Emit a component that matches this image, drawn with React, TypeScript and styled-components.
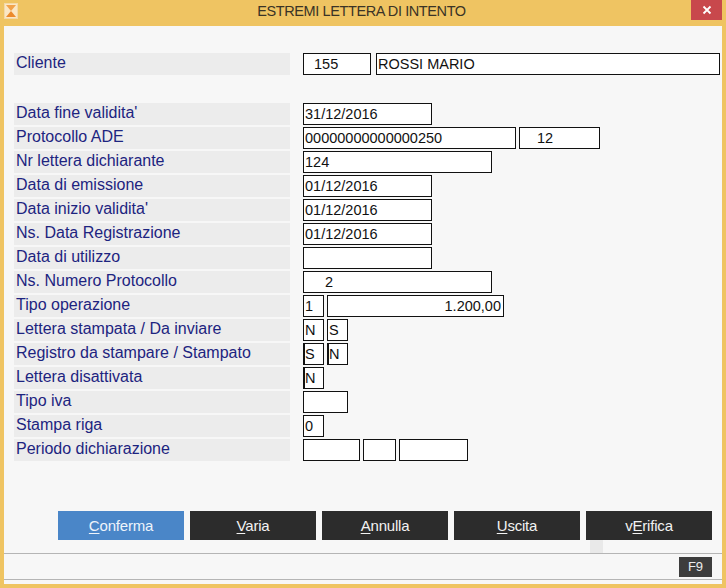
import React from 'react';
import styled, { createGlobalStyle } from 'styled-components';

const GlobalStyle = createGlobalStyle`
  html, body {
    margin: 0;
    padding: 0;
    background: #efc462;
    font-family: "Liberation Sans", Arial, sans-serif;
  }
`;

const Window = styled.div`
  width: 726px;
  height: 588px;
  display: flex;
  flex-direction: column;
  background: #efc462;
  box-sizing: border-box;
`;

const TitleBar = styled.div`
  height: 26px;
  display: flex;
  align-items: flex-start;
`;

const AppIcon = styled.div`
  width: 14px;
  height: 16px;
  margin: 3px 0 0 4px;
  display: flex;
`;

const Title = styled.div`
  flex: 1;
  text-align: center;
  font-size: 14.5px;
  letter-spacing: -0.4px;
  color: #3a3326;
  line-height: 23px;
  padding-left: 14px;
`;

const CloseButton = styled.div`
  width: 31px;
  height: 20px;
  margin-right: 4px;
  background: #c8484c;
  color: #fff;
  display: flex;
  align-items: center;
  justify-content: center;
`;

const Client = styled.div`
  flex: 1;
  margin: 0 4px 4px 4px;
  background: #f7f7f7;
  display: flex;
  flex-direction: column;
`;

const Form = styled.div`
  padding: 27px 0 0 10px;
  display: flex;
  flex-direction: column;
  gap: 2px;
`;

const Row = styled.div<{ $spaceAfter?: boolean }>`
  display: flex;
  align-items: center;
  height: 22px;
  margin-bottom: ${({ $spaceAfter }) => ($spaceAfter ? '26px' : '0')};
`;

const Label = styled.div`
  width: 276px;
  height: 22px;
  box-sizing: border-box;
  padding-left: 2px;
  background: #ececec;
  color: #1d2480;
  font-size: 16px;
  line-height: 19px;
  margin-right: 13px;
  white-space: nowrap;
`;

const FieldGroup = styled.div<{ $gap?: number }>`
  display: flex;
  gap: ${({ $gap }) => $gap ?? 3}px;
`;

const Field = styled.div<{ $w: number; $pad?: number; $right?: boolean; $thick?: boolean }>`
  width: ${({ $w }) => $w}px;
  height: 22px;
  box-sizing: border-box;
  border: 1px solid #111;
  border-left-width: ${({ $thick }) => ($thick ? '2px' : '1px')};
  background: #fff;
  color: #111;
  font-size: 14.5px;
  line-height: 20px;
  padding: 0 2px 0 ${({ $pad, $thick }) => ($pad ?? 1) - ($thick ? 1 : 0)}px;
  text-align: ${({ $right }) => ($right ? 'right' : 'left')};
  white-space: nowrap;
  overflow: hidden;
`;

const Footer = styled.div`
  margin-top: auto;
  display: flex;
  flex-direction: column;
`;

const ButtonRow = styled.div`
  display: flex;
  gap: 6px;
  padding-left: 54px;
`;

const ActionButton = styled.div<{ $primary?: boolean }>`
  width: 126px;
  height: 29px;
  background: ${({ $primary }) => ($primary ? '#4a86c8' : '#2c2c2c')};
  color: ${({ $primary }) => ($primary ? '#eef4fb' : '#f2f2f2')};
  font-size: 15px;
  display: flex;
  align-items: center;
  justify-content: center;
  letter-spacing: -0.2px;
  u {
    text-decoration: underline;
    text-underline-offset: 2px;
  }
`;

const GhostRow = styled.div`
  height: 13px;
  padding-left: 586px;
  display: flex;
`;

const Ghost = styled.div`
  width: 13px;
  background: #e9e9e9;
`;

const StatusBar = styled.div`
  height: 25px;
  border-top: 1px solid #b5b5b5;
  border-bottom: 1px solid #b5b5b5;
  display: flex;
  justify-content: flex-end;
  align-items: center;
  padding-right: 10px;
  margin-bottom: 4px;
`;

const KeyBadge = styled.div`
  width: 33px;
  height: 20px;
  background: #3d3d3d;
  color: #ececec;
  font-size: 13px;
  display: flex;
  align-items: center;
  justify-content: center;
`;

type FieldDef = { v?: string; w: number; pad?: number; right?: boolean; thick?: boolean };
type RowDef = { label: string; fields: FieldDef[]; gap?: number; spaceAfter?: boolean };

const rows: RowDef[] = [
  { label: 'Cliente', gap: 5, spaceAfter: true, fields: [{ v: '155', w: 68, pad: 10 }, { v: 'ROSSI MARIO', w: 344, pad: 1 }] },
  { label: "Data fine validita'", fields: [{ v: '31/12/2016', w: 129 }] },
  { label: 'Protocollo ADE', fields: [{ v: '00000000000000250', w: 213 }, { v: '12', w: 81, pad: 17 }] },
  { label: 'Nr lettera dichiarante', fields: [{ v: '124', w: 189 }] },
  { label: 'Data di emissione', fields: [{ v: '01/12/2016', w: 129 }] },
  { label: "Data inizio validita'", fields: [{ v: '01/12/2016', w: 129 }] },
  { label: 'Ns. Data Registrazione', fields: [{ v: '01/12/2016', w: 129 }] },
  { label: 'Data di utilizzo', fields: [{ w: 129 }] },
  { label: 'Ns. Numero Protocollo', fields: [{ v: '2', w: 189, pad: 21 }] },
  { label: 'Tipo operazione', fields: [{ v: '1', w: 21 }, { v: '1.200,00', w: 177, right: true }] },
  { label: 'Lettera stampata / Da inviare', fields: [{ v: 'N', w: 21 }, { v: 'S', w: 21 }] },
  { label: 'Registro da stampare / Stampato', fields: [{ v: 'S', w: 21, thick: true }, { v: 'N', w: 21, thick: true }] },
  { label: 'Lettera disattivata', fields: [{ v: 'N', w: 21, thick: true }] },
  { label: 'Tipo iva', fields: [{ w: 45 }] },
  { label: 'Stampa riga', fields: [{ v: '0', w: 21 }] },
  { label: 'Periodo dichiarazione', fields: [{ w: 57 }, { w: 33 }, { w: 69 }] },
];

const buttons: { pre: string; key: string; post: string; primary?: boolean }[] = [
  { pre: '', key: 'C', post: 'onferma', primary: true },
  { pre: '', key: 'V', post: 'aria' },
  { pre: '', key: 'A', post: 'nnulla' },
  { pre: '', key: 'U', post: 'scita' },
  { pre: 'v', key: 'E', post: 'rifica' },
];

const HourglassIcon = () => (
  <svg width="14" height="16" viewBox="0 0 14 16">
    <rect x="0.5" y="0.5" width="13" height="15" fill="#fbe7c4" stroke="#f3d9a8" />
    <path d="M2 2 H12 L7 8 Z" fill="#f2a24a" />
    <path d="M7 8 L12 14 H2 Z" fill="#ec8a2c" />
  </svg>
);

const CloseIcon = () => (
  <svg width="10" height="10" viewBox="0 0 10 10">
    <path d="M1.5 1.5 L8.5 8.5 M8.5 1.5 L1.5 8.5" stroke="#fff" strokeWidth="1.8" />
  </svg>
);

export default function App() {
  return (
    <Window>
      <GlobalStyle />
      <TitleBar>
        <AppIcon>
          <HourglassIcon />
        </AppIcon>
        <Title>ESTREMI LETTERA DI INTENTO</Title>
        <CloseButton>
          <CloseIcon />
        </CloseButton>
      </TitleBar>
      <Client>
        <Form>
          {rows.map((r) => (
            <Row key={r.label} $spaceAfter={r.spaceAfter}>
              <Label>{r.label}</Label>
              <FieldGroup $gap={r.gap}>
                {r.fields.map((f, i) => (
                  <Field key={i} $w={f.w} $pad={f.pad} $right={f.right} $thick={f.thick}>
                    {f.v}
                  </Field>
                ))}
              </FieldGroup>
            </Row>
          ))}
        </Form>
        <Footer>
          <ButtonRow>
            {buttons.map((b) => (
              <ActionButton key={b.key} $primary={b.primary}>
                <span>
                  {b.pre}
                  <u>{b.key}</u>
                  {b.post}
                </span>
              </ActionButton>
            ))}
          </ButtonRow>
          <GhostRow>
            <Ghost />
          </GhostRow>
          <StatusBar>
            <KeyBadge>F9</KeyBadge>
          </StatusBar>
        </Footer>
      </Client>
    </Window>
  );
}
